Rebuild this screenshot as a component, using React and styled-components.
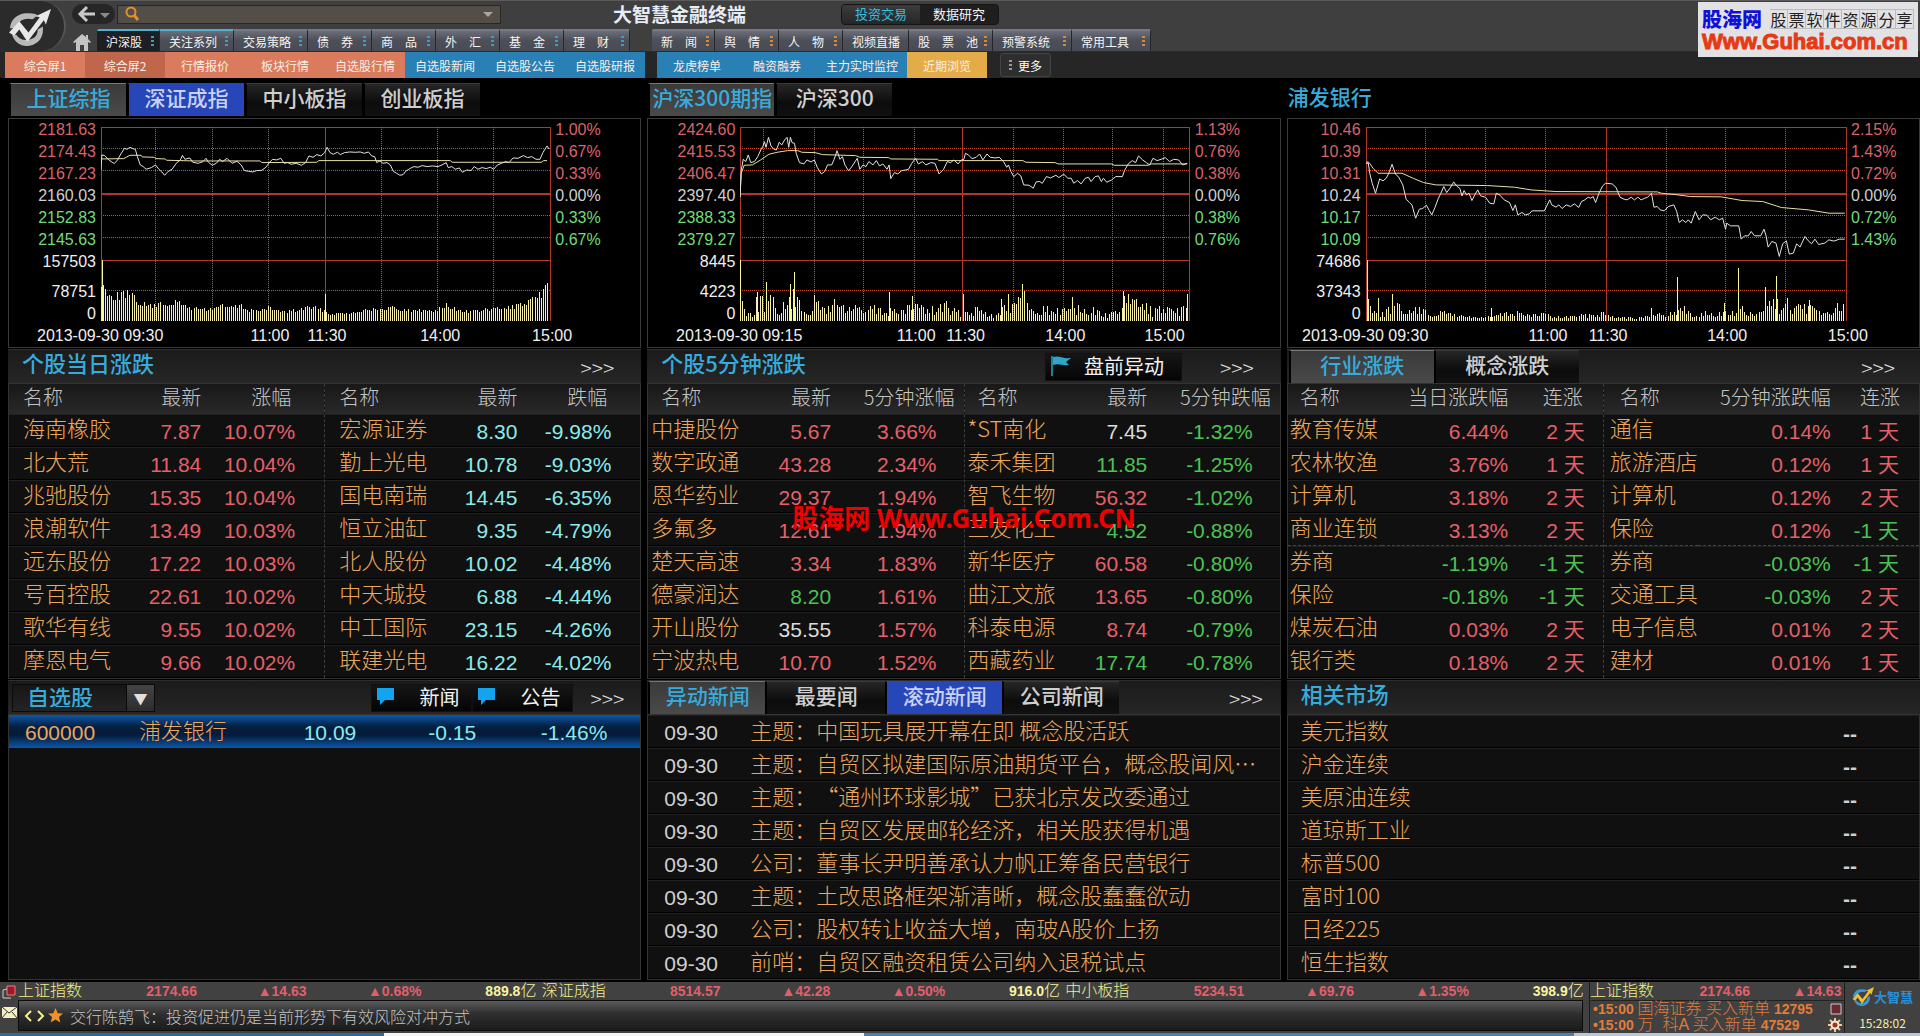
import React from 'react';
import styled, { createGlobalStyle, css } from 'styled-components';

const GlobalStyle = createGlobalStyle`
  * {
    box-sizing: border-box;
  }
  body {
    margin: 0;
    background: #000;
    color: #d8d8d8;
    font-family: 'Noto Sans CJK SC', sans-serif;
    text-spacing-trim: space-all;
  }
  button, input, select {
    font-family: inherit;
    margin: 0;
    padding: 0;
    border: 0;
    border-radius: 0;
    color: inherit;
    background: none;
  }
  h1, h2, p, ul {
    margin: 0;
    padding: 0;
    font-weight: 400;
  }
`;

const colors = {
  red: '#e4606a',
  green: '#4cc253',
  cyan: '#8ceaea',
  white: '#dcdcdc',
  name: '#eba75d',
  blue: '#38abdd',
  axisRed: '#d9636a',
  axisGreen: '#6fdc78',
};

/* ---------- header ---------- */

const Page = styled.div`
  min-height: 100vh;
  display: flex;
  flex-direction: column;
  background: #060606;
`;
const Header = styled.header`
  position: relative;
`;
const TopBar = styled.div`
  display: flex;
  height: 52px;
  border-top: 1px solid #5a5a5a;
  background: #3f3f3f;
  border-bottom: 1px solid #2c2c2c;
`;
const Logo = styled.div`
  width: 66px;
  background: #2b2b2b;
  border-right: 2px solid #555;
  border-radius: 0 32px 32px 0;
  svg {
    display: block;
    margin: 6px 0 0 8px;
  }
`;
const TopRows = styled.div`
  flex: 1;
  display: flex;
  flex-direction: column;
  justify-content: space-between;
`;
const TopRow = styled.div`
  display: flex;
  align-items: center;
  padding: 2px 0 0 6px;
`;
const BackButton = styled.button`
  width: 43px;
  height: 20px;
  border-radius: 10px;
  background: #262626;
  svg {
    display: block;
    margin: 0 auto;
  }
`;
const Search = styled.div`
  display: flex;
  align-items: center;
  flex: 0 1 384px;
  height: 19px;
  margin-left: 2px;
  padding: 0 6px;
  border: 1px solid #2a2622;
  background: #534e48;
  input {
    flex: 1;
    min-width: 0;
    height: 16px;
    font-size: 12px;
    outline: none;
  }
  button {
    width: 12px;
    height: 12px;
  }
  svg {
    display: block;
  }
`;
const AppTitle = styled.h1`
  margin-left: 112px;
  font-size: 19px;
  line-height: 22px;
  font-weight: 700;
  color: #e6ecf6;
`;
const ModeSwitch = styled.div`
  display: flex;
  margin-left: 95px;
  height: 21px;
  border: 1px solid #151515;
  border-radius: 4px;
  overflow: hidden;
  background: #1e1e1e;
`;
const ModeButton = styled.button`
  width: 78px;
  font-size: 13px;
  line-height: 18px;
  color: ${(props) => (props.$on ? '#35bfe0' : '#f2f2f2')};
  background: ${(props) => (props.$on ? 'linear-gradient(#3c3c3c, #262626)' : 'none')};
`;
const MenuRow = styled.nav`
  display: flex;
  align-items: flex-end;
  padding-left: 6px;
`;
const HomeButton = styled.button`
  width: 25px;
  height: 18px;
  svg {
    display: block;
  }
`;
const MenuGroup = styled.div`
  display: flex;
  margin-right: 22px;
  border-radius: 2px 2px 0 0;
  overflow: hidden;
`;
const MenuButton = styled.button`
  display: flex;
  align-items: center;
  justify-content: space-between;
  width: ${(props) => props.$width}px;
  height: 22px;
  padding: 0 5px 0 9px;
  font-size: 12px;
  white-space: pre;
  color: #f4f4f4;
  background: linear-gradient(#6c6f7a, #4d5059 45%, #484b54);
  border-right: 1px solid #25262b;
  border-top: 2px solid ${(props) => (props.$lit ? '#4fb0cf' : '#777a84')};
  ${(props) =>
    props.$on &&
    css`
      background: #1e1f22;
    `}
`;
const Dots = styled.span`
  width: 3px;
  height: 11px;
  background: repeating-linear-gradient(${(props) => props.$color} 0 2px, transparent 2px 4px);
`;
const SubBar = styled.nav`
  display: flex;
  height: 26px;
  padding-left: 5px;
  background: #262626;
`;
const subColors = {
  orange: '#d97b5c',
  rust: '#c0674b',
  blue: '#2980b5',
  gold: '#e3ac48',
};
const SubButton = styled.button`
  flex: 0 1 ${(props) => props.$width || 80}px;
  font-size: 12px;
  white-space: nowrap;
  color: #fbeee6;
  background: ${(props) => subColors[props.$tone]};
`;
const SubGap = styled.div`
  flex: 0 0 12px;
`;
const MoreButton = styled.button`
  display: flex;
  align-items: center;
  justify-content: center;
  gap: 6px;
  width: 51px;
  height: 24px;
  margin: 1px 0 0 13px;
  font-size: 12px;
  color: #fff;
  border: 1px solid #444;
  border-radius: 3px;
  background: #2e2e2e;
`;
const SiteBadge = styled.div`
  position: absolute;
  top: 2px;
  right: 2px;
  width: 220px;
  height: 55px;
  padding: 4px 4px 0;
  background: #e2e2e4;
`;
const BadgeLine = styled.div`
  display: flex;
  align-items: center;
  justify-content: space-between;
  height: 25px;
  strong {
    font-size: 20px;
    font-weight: 900;
    color: #1010d8;
  }
`;
const BadgeBoxes = styled.span`
  display: flex;
  font-size: 16px;
  line-height: 18px;
  color: #222;
  span {
    width: 18px;
    text-align: center;
    border: 1px solid #bbb;
    border-left-width: 0;
  }
`;
const BadgeUrl = styled.div`
  font-family: 'Liberation Sans', sans-serif;
  font-size: 22px;
  line-height: 22px;
  font-weight: 700;
  color: #e63a14;
  -webkit-text-stroke: 1px #e63a14;
`;

/* ---------- panels ---------- */

const Board = styled.main`
  flex: 1;
  display: grid;
  grid-template-columns: repeat(3, minmax(0, 1fr));
  gap: 6px;
  padding: 0 0 2px 8px;
  background: #000;
`;
const Column = styled.section`
  display: flex;
  flex-direction: column;
`;
const Bar = styled.div`
  display: flex;
  align-items: center;
  height: 34px;
  padding: 0 ${(props) => props.$right || 27}px 0 14px;
  margin-top: 1px;
  border-top: 1px solid #2e2e2e;
  background: linear-gradient(#1b1b1b, #262626);
`;
const TabBar = styled(Bar)`
  align-items: stretch;
  padding-left: ${(props) => props.$left || 1}px;
`;
const ChartTabs = styled.div`
  display: flex;
  align-items: flex-end;
  gap: 1px;
  height: 40px;
  padding: 0 0 2px 1px;
`;
const Tab = styled.button`
  min-width: ${(props) => props.$width || 117}px;
  height: 33px;
  padding: 0 2px 6px;
  font-size: 21px;
  line-height: 26px;
  font-weight: 500;
  color: #cfcfcf;
  background: linear-gradient(#262626, #0c0c0c 60%, #111);
  border-top: 1px solid #3a3a3a;
  border-left: 2px solid #000;
  ${(props) =>
    props.$state === 'active' &&
    css`
      color: ${colors.blue};
      background: linear-gradient(#3a3a3a, #4a4a4a);
      border-top-color: #777;
    `}
  ${(props) =>
    props.$state === 'hot' &&
    css`
      color: #c9d2f4;
      background: #2747b8;
      border-top-color: #2747b8;
    `}
`;
const Title = styled.h2`
  font-size: 22px;
  line-height: 25px;
  font-weight: 500;
  color: ${colors.blue};
  padding-bottom: 8px;
`;
const ChartTitle = styled(Title)`
  font-size: 21px;
  padding-bottom: 7px;
`;
const More = styled.a`
  margin-left: auto;
  align-self: center;
  font-size: 21px;
  line-height: 24px;
  font-weight: 300;
  color: #ddd;
  text-decoration: none;
`;
const DarkButton = styled.button`
  display: flex;
  align-items: center;
  height: 28px;
  gap: ${(props) => props.$space}px;
  padding: 0 ${(props) => props.$end}px 2px 4px;
  font-size: 20px;
  line-height: 26px;
  color: #f2f2f2;
  background: linear-gradient(#161616, #040404);
  border: 1px solid #111;
`;
const Push = styled.div`
  margin-left: auto;
  display: flex;
  ${More} {
    margin-left: ${(props) => props.$gap}px;
  }
`;
const Panel = styled.div`
  position: relative;
  display: flex;
  flex: ${(props) => (props.$fill ? 1 : 'none')};
  flex-direction: ${(props) => (props.$column ? 'column' : 'row')};
  border: 1px solid #333;
  background: #101010;
`;

/* ---------- intraday chart ---------- */

const ChartPanel = styled.div`
  display: grid;
  grid-template-columns: ${(props) => props.$left}px minmax(0, 1fr) ${(props) => props.$right}px;
  height: 230px;
  border: 1px solid #3a3a3a;
  background: #000;
`;
const Axis = styled.div`
  display: flex;
  flex-direction: column;
  padding: 0 5px;
  text-align: ${(props) => props.$align};
  font-family: 'Liberation Sans', sans-serif;
  font-size: 16px;
  line-height: 22px;
  span:nth-child(8) {
    margin-top: 8px;
  }
`;
const AxisLabel = styled.span`
  color: ${(props) => props.$color};
`;
const Plot = styled.svg`
  width: 100%;
  height: 220px;
  margin-top: 8px;
  overflow: visible;
  text {
    font-family: 'Liberation Sans', sans-serif;
    font-size: 16px;
    fill: #f0f0f0;
  }
  path, polyline {
    fill: none;
    vector-effect: non-scaling-stroke;
  }
`;

const axisColors = [
  colors.axisRed, colors.axisRed, colors.axisRed, '#cfcfcf',
  colors.axisGreen, colors.axisGreen, '#f0f0f0', '#f0f0f0', '#f0f0f0',
];
const levels = [
  { y: 0 },
  { y: 21, dotted: true },
  { y: 43, dotted: true },
  { y: 67, zero: true },
  { y: 88, dotted: true },
  { y: 110, dotted: true },
  { y: 133 },
  { y: 163, dotted: true },
];

// interpolates the volume envelope and returns one stroke per tick
const volumeBars = (chart, odd) => {
  const [x0, y0, w, h] = chart.box;
  const base = y0 + h;
  const { volume, rough } = chart;
  let d = '';
  let seed = 7;
  let n = 0;
  let k = 0;
  for (let x = x0; x < x0 + w - 4; x += 5) {
    while (k < volume.length - 2 && volume[k + 1][0] < x) k += 1;
    const [ax, ay] = volume[k];
    const [bx, by] = volume[k + 1];
    const t = Math.min(1, Math.max(0, (x - ax) / (bx - ax)));
    seed = (seed * 1103515245 + 12345) % 2147483648;
    const size = (ay + (by - ay) * t) * (1 - rough * (seed / 2147483648));
    if (n % 2 === odd) d += `M${x} ${base}V${Math.round(base - size)}`;
    n += 1;
  }
  if (odd) {
    chart.spikes.forEach(([x, size]) => {
      d += `M${x} ${base}V${base - size}`;
    });
  }
  return d;
};

const charts = {
  sh: {
    box: [243, 51, 1087, 583],
    left: 92,
    right: 90,
    prices: ['2181.63', '2174.43', '2167.23', '2160.03', '2152.83', '2145.63', '157503', '78751', '0'],
    percents: ['1.00%', '0.67%', '0.33%', '0.00%', '0.33%', '0.67%'],
    ticks: [12.2, 24.8, 37.3, 62.4, 75, 87.4],
    noon: 49.9,
    start: '2013-09-30 09:30',
    times: [['11:00', 37.6], ['11:30', 50.3], ['14:00', 75.5], ['15:00', 100.4]],
    rough: 0.3,
    line: '243,182 245,135 252,137 262,150 275,161 283,150 292,130 300,115 306,118 313,112 320,116 326,118 331,140 338,165 345,170 352,178 365,173 375,165 383,178 390,186 397,196 405,185 415,178 425,160 435,150 440,136 446,148 458,144 465,157 478,160 490,155 497,145 503,157 512,166 522,160 530,148 537,155 548,145 560,160 572,154 582,165 590,182 600,184 610,186 620,182 632,181 642,172 650,158 658,148 668,150 678,145 686,160 695,158 703,163 715,160 728,166 738,158 746,138 756,142 765,134 775,138 784,128 790,112 797,128 805,133 815,127 822,134 832,128 845,126 858,127 870,126 880,130 890,126 898,138 905,140 910,158 918,153 925,160 935,158 943,165 950,184 958,190 966,196 974,194 980,184 990,176 1000,170 1010,172 1020,167 1032,170 1045,168 1058,170 1068,165 1078,158 1083,173 1092,170 1100,178 1110,174 1117,187 1128,180 1138,182 1146,170 1155,178 1165,173 1175,176 1185,172 1193,178 1202,165 1212,160 1222,155 1230,158 1240,144 1252,145 1265,137 1275,143 1285,140 1295,148 1305,148 1312,128 1322,108 1327,117',
    average: '243,147 298,146 313,136 340,136 343,141 372,142 376,146 398,147 402,151 470,153 628,153 632,158 765,157 770,152 1088,152 1093,157 1308,157 1314,152 1322,152',
    volume: [[243, 125], [256, 110], [262, 98], [270, 85], [305, 98], [320, 82], [340, 60], [370, 52], [400, 62], [430, 64], [450, 50], [480, 42], [510, 42], [535, 54], [560, 48], [585, 52], [600, 38], [640, 38], [652, 48], [680, 32], [720, 38], [750, 50], [780, 38], [795, 25], [830, 27], [870, 33], [890, 45], [920, 36], [945, 50], [960, 42], [1000, 36], [1050, 38], [1080, 52], [1100, 40], [1140, 32], [1180, 41], [1220, 44], [1245, 52], [1270, 58], [1290, 72], [1305, 92], [1325, 125]],
    spikes: [[247, 182], [787, 80], [1080, 54]],
  },
  csi: {
    box: [240, 51, 1088, 583],
    left: 92,
    right: 90,
    prices: ['2424.60', '2415.53', '2406.47', '2397.40', '2388.33', '2379.27', '8445', '4223', '0'],
    percents: ['1.13%', '0.76%', '0.38%', '0.00%', '0.38%', '0.76%'],
    ticks: [5.3, 16.6, 27.5, 38.8, 60.8, 72.1, 82.9, 94.2],
    noon: 49.6,
    start: '2013-09-30 09:15',
    times: [['11:00', 39.2], ['11:30', 50.2], ['14:00', 72.4], ['15:00', 94.5]],
    rough: 0.7,
    line: '240,262 243,180 248,148 254,155 260,135 266,158 275,155 283,140 291,118 296,108 299,95 303,112 309,82 315,108 322,118 328,120 335,97 341,105 348,90 354,82 358,112 362,82 366,98 372,100 376,130 384,158 395,162 402,150 412,156 420,150 427,172 437,192 445,185 452,165 462,165 468,148 475,122 482,148 488,140 494,165 503,183 512,168 524,145 530,178 538,165 545,170 552,155 562,165 570,152 578,168 586,162 596,178 601,165 605,206 614,188 622,192 632,182 642,180 648,178 656,160 665,145 672,162 682,155 690,165 702,158 712,160 722,192 733,178 742,155 750,158 758,150 768,162 776,150 782,148 786,130 793,135 802,146 812,142 820,132 828,150 838,132 846,142 858,144 868,142 878,155 886,172 890,165 896,185 903,200 912,190 920,198 927,225 940,226 950,235 957,216 966,215 972,220 982,200 992,204 1005,196 1012,203 1024,193 1034,205 1042,205 1048,220 1057,212 1066,222 1076,205 1084,202 1090,215 1100,200 1108,198 1115,215 1120,205 1128,217 1140,210 1150,200 1166,200 1171,182 1180,162 1190,152 1198,158 1205,138 1215,150 1224,158 1232,165 1240,145 1250,152 1260,148 1270,143 1280,155 1290,148 1302,150 1312,165 1323,160',
    average: '240,262 243,190 250,166 270,165 290,150 310,133 330,127 355,122 380,122 390,127 422,128 440,134 520,137 530,142 600,143 605,147 718,148 722,152 925,152 932,157 1003,158 1010,162 1140,162 1146,166 1228,166 1236,162 1323,162',
    volume: [[240, 90], [250, 60], [270, 32], [283, 88], [303, 85], [326, 72], [335, 45], [350, 65], [372, 105], [385, 65], [410, 40], [420, 80], [450, 45], [466, 80], [500, 52], [524, 68], [535, 35], [555, 55], [580, 42], [615, 48], [640, 35], [658, 78], [675, 62], [700, 42], [740, 70], [750, 42], [775, 36], [795, 52], [830, 46], [860, 25], [874, 62], [900, 60], [923, 80], [935, 65], [950, 35], [977, 55], [1000, 36], [1046, 60], [1080, 36], [1105, 50], [1120, 26], [1150, 32], [1168, 75], [1200, 75], [1222, 62], [1240, 42], [1265, 50], [1290, 32], [1310, 52], [1325, 45]],
    spikes: [[241, 182], [283, 88], [305, 118], [363, 112], [373, 148], [602, 88], [658, 75], [780, 80], [874, 66], [891, 80], [923, 112], [928, 91], [1046, 72], [1168, 90], [1181, 80], [1323, 80]],
  },
  pf: {
    box: [231, 51, 1161, 583],
    left: 78,
    right: 73,
    prices: ['10.46', '10.39', '10.31', '10.24', '10.17', '10.09', '74686', '37343', '0'],
    percents: ['2.15%', '1.43%', '0.72%', '0.00%', '0.72%', '1.43%'],
    ticks: [12.4, 24.9, 37.4, 62.5, 74.9, 87.4],
    noon: 50,
    start: '2013-09-30 09:30',
    times: [['11:00', 37.9], ['11:30', 50.4], ['14:00', 75.2], ['15:00', 100.3]],
    rough: 0.6,
    line: '231,160 236,155 240,190 246,220 254,250 264,207 272,213 280,205 286,190 294,163 302,192 310,202 320,225 328,268 336,278 342,285 351,325 360,298 368,296 377,286 384,302 390,315 398,292 405,268 412,250 419,230 426,248 434,235 443,216 450,228 458,236 463,258 468,242 474,255 480,250 487,272 494,255 501,240 508,258 520,262 530,280 540,282 546,250 555,256 565,270 578,278 586,302 592,285 598,315 608,308 616,315 626,312 632,303 662,303 668,288 675,270 680,285 690,292 697,285 705,296 715,285 725,290 735,282 745,293 752,275 760,270 768,262 774,265 780,260 786,278 794,250 803,228 810,220 826,222 835,232 845,262 855,268 862,270 872,262 880,270 888,262 896,270 905,265 912,262 921,250 927,292 935,290 942,300 952,303 962,290 975,285 982,305 988,338 996,330 1004,338 1010,330 1017,340 1027,305 1036,330 1045,315 1055,316 1064,330 1075,322 1085,330 1093,325 1100,358 1103,340 1112,348 1132,348 1138,388 1146,378 1155,378 1162,365 1170,378 1185,378 1193,358 1198,378 1203,412 1212,395 1222,400 1230,440 1238,402 1247,393 1254,433 1264,430 1272,402 1280,412 1292,380 1300,393 1308,402 1316,388 1325,404 1340,400 1350,390 1362,394 1375,388 1388,388',
    average: '231,160 240,160 248,175 260,190 318,190 345,205 370,218 400,225 525,227 590,232 630,240 690,245 935,246 945,250 985,255 1015,260 1090,261 1140,272 1190,275 1235,293 1300,300 1350,310 1388,310',
    volume: [[231, 90], [240, 70], [250, 52], [258, 30], [272, 28], [295, 60], [320, 50], [335, 32], [350, 48], [370, 40], [385, 25], [423, 35], [440, 28], [470, 18], [520, 15], [545, 22], [595, 36], [630, 20], [662, 33], [680, 16], [720, 16], [770, 25], [803, 32], [820, 20], [870, 15], [900, 12], [945, 30], [978, 30], [995, 55], [1010, 38], [1025, 14], [1044, 35], [1080, 20], [1097, 40], [1125, 30], [1145, 50], [1155, 25], [1190, 30], [1202, 75], [1227, 70], [1235, 35], [1250, 60], [1260, 35], [1278, 52], [1304, 55], [1340, 38], [1352, 24], [1367, 58], [1388, 52]],
    spikes: [[235, 182], [262, 68], [295, 80], [534, 38], [920, 40], [983, 132], [1097, 55], [1132, 160], [1197, 103], [1223, 136], [1251, 68], [1304, 63]],
  },
};

const IntradayChart = ({ chart }) => (
  <ChartPanel $left={chart.left} $right={chart.right}>
    <Axis $align="right">
      {chart.prices.map((p, i) => (
        <AxisLabel key={p} $color={axisColors[i]}>{p}</AxisLabel>
      ))}
    </Axis>
    <Plot>
      <g shapeRendering="crispEdges" stroke="#b0362e">
        {levels.map((l) => (
          <line
            key={l.y}
            x1="0"
            x2="100%"
            y1={l.y}
            y2={l.y}
            stroke={l.dotted ? '#d2502e' : undefined}
            strokeWidth={l.zero ? 2 : 1}
            strokeDasharray={l.dotted ? '1 1' : undefined}
          />
        ))}
        {chart.ticks.map((t) => (
          <line key={t} x1={`${t}%`} x2={`${t}%`} y1="0" y2="194" stroke="#d2502e" strokeDasharray="1 1" />
        ))}
        {[0, chart.noon, 100].map((t) => (
          <line key={t} x1={`${t}%`} x2={`${t}%`} y1="0" y2="194" />
        ))}
      </g>
      <svg width="100%" height="194" viewBox={chart.box.join(' ')} preserveAspectRatio="none">
        <path d={volumeBars(chart, 0)} stroke="#fbe8c4" shapeRendering="crispEdges" />
        <path d={volumeBars(chart, 1)} stroke="#faf894" shapeRendering="crispEdges" />
        <polyline points={chart.average} stroke="#e8dfa0" />
        <polyline points={chart.line} stroke="#e6e2e2" />
      </svg>
      <text x="-64" y="214">{chart.start}</text>
      {chart.times.map(([label, x]) => (
        <text key={label} x={`${x}%`} y="214" textAnchor="middle">{label}</text>
      ))}
    </Plot>
    <Axis $align="left">
      {chart.percents.map((p, i) => (
        <AxisLabel key={i} $color={axisColors[i]}>{p}</AxisLabel>
      ))}
    </Axis>
  </ChartPanel>
);

/* ---------- ranking tables ---------- */

const RankTable = styled.table`
  flex: 1;
  width: 50%;
  table-layout: fixed;
  border-collapse: separate;
  border-spacing: 0;
  & + & {
    border-left: 1px dashed #3c3c3c;
  }
  th {
    height: 30px;
    padding: 0 0 4px;
    font-size: 20px;
    line-height: 26px;
    font-weight: 300;
    text-align: right;
    white-space: nowrap;
    color: #c4c4c4;
    background: linear-gradient(#181818, #292929);
  }
  td {
    height: 33px;
    padding: 3px 0 0;
    font-family: 'Liberation Sans', 'Noto Sans CJK SC', sans-serif;
    font-size: 21px;
    line-height: 26px;
    text-align: right;
    white-space: nowrap;
    border-top: 1px solid #202020;
    border-bottom: 1px solid #000;
  }
  th:first-child {
    width: ${(props) => props.$cols[0]}%;
    padding-left: ${(props) => props.$head[0]}px;
    text-align: left;
  }
  th:nth-child(2) {
    width: ${(props) => props.$cols[1]}%;
  }
  th:last-child {
    padding-right: ${(props) => props.$head[1]}px;
  }
  td:first-child {
    padding: 0 0 6px ${(props) => props.$body[0]}px;
    font-family: 'Noto Sans CJK SC', sans-serif;
    font-size: 22px;
    line-height: 25px;
    font-weight: 300;
    text-align: left;
    color: ${colors.name};
  }
  td:last-child {
    padding-right: ${(props) => props.$body[1]}px;
  }
  tr.split td {
    border-bottom: 1px dashed #444;
  }
`;
const Num = styled.td`
  color: ${(props) => colors[props.$tone]};
`;

const Ranking = ({ heads, rows, shape, split }) => (
  <RankTable $cols={shape.cols} $head={shape.head} $body={shape.body}>
    <thead>
      <tr>{heads.map((h) => <th key={h} scope="col">{h}</th>)}</tr>
    </thead>
    <tbody>
      {rows.map(([name, a, toneA, b, toneB], i) => (
        <tr key={name} className={split === i ? 'split' : undefined}>
          <td>{name}</td>
          <Num $tone={toneA}>{a}</Num>
          <Num $tone={toneB}>{b}</Num>
        </tr>
      ))}
    </tbody>
  </RankTable>
);

const shapes = {
  day: { cols: [30, 31], head: [14, 33], body: [14, 29] },
  minute: { cols: [30, 28], head: [13, 9], body: [3, 27] },
  sector: { cols: [30, 40], head: [12, 20], body: [2, 18] },
  sectorFast: { cols: [30, 42], head: [16, 19], body: [6, 20] },
};

const r = 'red';
const g = 'green';
const c = 'cyan';
const w = 'white';
const dayUp = [
  ['海南橡胶', '7.87', r, '10.07%', r],
  ['北大荒', '11.84', r, '10.04%', r],
  ['兆驰股份', '15.35', r, '10.04%', r],
  ['浪潮软件', '13.49', r, '10.03%', r],
  ['远东股份', '17.22', r, '10.03%', r],
  ['号百控股', '22.61', r, '10.02%', r],
  ['歌华有线', '9.55', r, '10.02%', r],
  ['摩恩电气', '9.66', r, '10.02%', r],
];
const dayDown = [
  ['宏源证券', '8.30', c, '-9.98%', c],
  ['勤上光电', '10.78', c, '-9.03%', c],
  ['国电南瑞', '14.45', c, '-6.35%', c],
  ['恒立油缸', '9.35', c, '-4.79%', c],
  ['北人股份', '10.02', c, '-4.48%', c],
  ['中天城投', '6.88', c, '-4.44%', c],
  ['中工国际', '23.15', c, '-4.26%', c],
  ['联建光电', '16.22', c, '-4.02%', c],
];
const minuteUp = [
  ['中捷股份', '5.67', r, '3.66%', r],
  ['数字政通', '43.28', r, '2.34%', r],
  ['恩华药业', '29.37', r, '1.94%', r],
  ['多氟多', '12.61', r, '1.94%', r],
  ['楚天高速', '3.34', r, '1.83%', r],
  ['德豪润达', '8.20', g, '1.61%', r],
  ['开山股份', '35.55', w, '1.57%', r],
  ['宁波热电', '10.70', r, '1.52%', r],
];
const minuteDown = [
  ['*ST南化', '7.45', w, '-1.32%', g],
  ['泰禾集团', '11.85', g, '-1.25%', g],
  ['智飞生物', '56.32', r, '-1.02%', g],
  ['三友化工', '4.52', g, '-0.88%', g],
  ['新华医疗', '60.58', r, '-0.80%', g],
  ['曲江文旅', '13.65', r, '-0.80%', g],
  ['科泰电源', '8.74', r, '-0.79%', g],
  ['西藏药业', '17.74', g, '-0.78%', g],
];
const sectorDay = [
  ['教育传媒', '6.44%', r, '2 天', r],
  ['农林牧渔', '3.76%', r, '1 天', r],
  ['计算机', '3.18%', r, '2 天', r],
  ['商业连锁', '3.13%', r, '2 天', r],
  ['券商', '-1.19%', g, '-1 天', g],
  ['保险', '-0.18%', g, '-1 天', g],
  ['煤炭石油', '0.03%', r, '2 天', r],
  ['银行类', '0.18%', r, '2 天', r],
];
const sectorMinute = [
  ['通信', '0.14%', r, '1 天', r],
  ['旅游酒店', '0.12%', r, '1 天', r],
  ['计算机', '0.12%', r, '2 天', r],
  ['保险', '0.12%', r, '-1 天', g],
  ['券商', '-0.03%', g, '-1 天', g],
  ['交通工具', '-0.03%', g, '2 天', r],
  ['电子信息', '0.01%', r, '2 天', r],
  ['建材', '0.01%', r, '1 天', r],
];

const Overprint = styled.div`
  position: absolute;
  top: 118px;
  left: 0;
  right: 0;
  text-align: center;
  font-family: 'Noto Sans', 'Noto Sans CJK SC', sans-serif;
  font-size: 26px;
  line-height: 32px;
  font-weight: 700;
  color: #f00000;
  pointer-events: none;
`;

/* ---------- lower lists ---------- */

const WatchSelect = styled.div`
  position: relative;
  display: flex;
  width: 143px;
  height: 28px;
  margin-left: -10px;
  select {
    width: 100%;
    padding: 0 0 4px 14px;
    appearance: none;
    font-size: 22px;
    line-height: 22px;
    font-weight: 500;
    color: ${colors.blue};
    background: linear-gradient(#161616, #242424);
    border: 1px solid #0a0a0a;
  }
  span {
    position: absolute;
    top: 0;
    right: 0;
    width: 29px;
    height: 28px;
    font-size: 14px;
    line-height: 26px;
    text-align: center;
    color: #e4e0d8;
    background: linear-gradient(#444, #2c2c2c);
    border: 1px solid #0a0a0a;
    pointer-events: none;
  }
`;
const WatchTable = styled.table`
  width: 100%;
  table-layout: fixed;
  border-spacing: 0;
  font-family: 'Liberation Sans', 'Noto Sans CJK SC', sans-serif;
  font-size: 21px;
  line-height: 28px;
  color: ${colors.cyan};
  background: linear-gradient(#0d56a8, #052043 35%, #041a38 60%, #0d56a8);
  td {
    height: 33px;
    padding: 2px 0 0;
    text-align: right;
  }
  td:nth-child(1) {
    width: 130px;
    padding-left: 16px;
    text-align: left;
    color: ${colors.name};
  }
  td:nth-child(2) {
    padding: 0 0 5px;
    font-family: 'Noto Sans CJK SC', sans-serif;
    font-size: 22px;
    font-weight: 300;
    text-align: left;
    color: ${colors.name};
  }
  td:nth-child(3) {
    width: 16%;
  }
  td:nth-child(4) {
    width: 19%;
  }
  td:nth-child(5) {
    width: 26%;
    padding-right: 33px;
  }
`;
const List = styled.ul`
  list-style: none;
`;
const Item = styled.li`
  display: flex;
  align-items: center;
  height: 33px;
  padding-left: ${(props) => props.$left}px;
  border-top: 1px solid #202020;
  border-bottom: 1px solid #000;
  time {
    width: 86px;
    padding-top: 3px;
    font-family: 'Liberation Sans', sans-serif;
    font-size: 21px;
    color: #cfcfcf;
  }
  a {
    padding-bottom: 5px;
    font-size: 22px;
    line-height: 26px;
    font-weight: 300;
    white-space: nowrap;
    color: ${colors.name};
    text-decoration: none;
  }
  b {
    margin-left: auto;
    padding: 4px 62px 0 0;
    font-family: 'Liberation Sans', sans-serif;
    font-size: 21px;
    color: #cfcfcf;
  }
`;

const news = [
  '主题：中国玩具展开幕在即 概念股活跃',
  '主题：自贸区拟建国际原油期货平台，概念股闻风…',
  '主题：“通州环球影城”已获北京发改委通过',
  '主题：自贸区发展邮轮经济，相关股获得机遇',
  '公司：董事长尹明善承认力帆正筹备民营银行',
  '主题：土改思路框架渐清晰，概念股蠢蠢欲动',
  '公司：股权转让收益大增，南玻A股价上扬',
  '前哨：自贸区融资租赁公司纳入退税试点',
];
const markets = ['美元指数', '沪金连续', '美原油连续', '道琼斯工业', '标普500', '富时100', '日经225', '恒生指数'];

/* ---------- status bar ---------- */

const Footer = styled.footer`
  background: #414141;
`;
const FooterGrid = styled.div`
  display: grid;
  grid-template-columns: 18px minmax(0, 1fr) 256px 75px;
  height: 51px;
`;
const FooterIcons = styled.div`
  display: flex;
  flex-direction: column;
  gap: 8px;
  padding: 3px 0 0 2px;
`;
const Indices = styled.div`
  display: grid;
  grid-template-columns: repeat(3, minmax(0, 1fr));
  height: 18px;
`;
const Quote = styled.div`
  display: grid;
  grid-template-columns: 12fr 22fr 21fr 22fr 22fr 1fr;
  font-family: 'Liberation Sans', 'Noto Sans CJK SC', sans-serif;
  font-size: 14px;
  line-height: 18px;
  font-weight: 700;
  text-align: right;
  white-space: nowrap;
  color: #e0606a;
  span {
    font-size: 16px;
    font-weight: 300;
    text-align: left;
    color: #f0ee88;
  }
  em {
    font-style: normal;
    color: #f6f4a0;
  }
  i {
    font-style: normal;
    font-size: 16px;
    font-weight: 300;
  }
`;
const SideQuote = styled(Quote)`
  grid-template-columns: 26% 37% 36%;
  height: 19px;
  border-bottom: 1px solid #222;
`;
const Ticker = styled.div`
  display: flex;
  align-items: center;
  height: 31px;
  margin-right: 6px;
  padding-left: 5px;
  border: 1px solid #0c0c0c;
  background: linear-gradient(#5a5a5a, #2e2e2e 45%, #1c1c1c);
  p {
    margin-left: 7px;
    font-size: 16px;
    line-height: 22px;
    font-weight: 300;
    color: #c4c4c4;
  }
  button {
    width: 12px;
    height: 16px;
  }
  svg {
    display: block;
  }
`;
const Side = styled.div`
  border-left: 1px solid #1c1c1c;
  border-right: 1px solid #1c1c1c;
`;
const Order = styled.div`
  display: flex;
  align-items: center;
  justify-content: space-between;
  height: 16px;
  padding: 0 2px 0 3px;
  font-family: 'Liberation Sans', 'Noto Sans CJK SC', sans-serif;
  font-size: 14px;
  font-weight: 700;
  line-height: 16px;
  white-space: pre;
  color: #e07c3c;
  span span {
    font-size: 16px;
    font-weight: 300;
  }
`;
const Brand = styled.div`
  display: flex;
  flex-direction: column;
  align-items: center;
  justify-content: space-between;
  padding: 4px 2px 2px;
  div {
    display: flex;
    align-items: center;
    font-size: 13px;
    line-height: 22px;
    font-weight: 700;
    color: #2b8fd6;
  }
  time {
    font-size: 12px;
    line-height: 16px;
    color: #f3f0a4;
  }
`;
const Taskbar = styled.div`
  height: 3px;
  background: linear-gradient(90deg, #2a6a9a 0 20%, #f4f4f4 20% 45%, #4a7fae 45% 82%, #b8c8d8 82%);
`;

const indices = [
  ['上证指数', '2174.66', '▲14.63', '▲0.68%', '889.8'],
  ['深证成指', '8514.57', '▲42.28', '▲0.50%', '916.0'],
  ['中小板指', '5234.51', '▲69.76', '▲1.35%', '398.9'],
];

const LogoMark = ({ size, ring, bolt }) => (
  <svg width={size} height={size} viewBox="0 0 42 40" aria-hidden="true">
    <path d="M2 20C2 12 8 6 17 5c5 0 9 0 12 2l-5 4C15 9 10 13 8 19z" fill={ring} />
    <path d="M4 26c3 9 11 13 20 10 8-3 11-10 10-18l-5 3c0 6-3 9-9 10-5 1-9-1-12-5z" fill={ring} />
    <path d="M1 24l10-11 9 11L31 9l-4-1L42 1l-5 15-2-4-16 21-8-12-5 6z" fill={bolt} />
  </svg>
);
const Bubble = () => (
  <svg width="19" height="18" viewBox="0 0 19 18" aria-hidden="true">
    <path d="M1 0h17v12H9l-5 5v-5H1z" fill="#12a4ee" />
  </svg>
);

const menuLeft = [
  ['沪深股', 63],
  ['关注系列', 74],
  ['交易策略', 74],
  ['债\u3000券', 64],
  ['商\u3000品', 64],
  ['外\u3000汇', 64],
  ['基\u3000金', 64],
  ['理\u3000财', 66],
];
const menuRight = [
  ['新\u3000闻', 63],
  ['舆\u3000情', 64],
  ['人\u3000物', 64],
  ['视频直播', 66],
  ['股\u3000票\u3000池', 84],
  ['预警系统', 79],
  ['常用工具', 79],
];

const App = () => {
  return (
    <Page lang="zh-CN">
      <GlobalStyle />
      <Header>
        <TopBar>
          <Logo>
            <LogoMark size={43} ring="#b9b9b9" bolt="#e8e8e8" />
          </Logo>
          <TopRows>
            <TopRow>
              <BackButton aria-label="返回">
                <svg width="38" height="18" viewBox="0 0 38 18">
                  <path d="M12 2L5 9l7 7M5 9h15" fill="none" stroke="#c9c9c9" strokeWidth="3" />
                  <path d="M25 8h10l-5 5z" fill="#8a8a8a" />
                </svg>
              </BackButton>
              <Search>
                <svg width="16" height="16" viewBox="0 0 16 16" aria-hidden="true">
                  <circle cx="7" cy="6" r="4.5" fill="none" stroke="#e0912c" strokeWidth="2" />
                  <path d="M10 9l4 5" stroke="#e0912c" strokeWidth="3" />
                </svg>
                <input type="text" aria-label="搜索" />
                <button aria-label="展开">
                  <svg width="12" height="12" viewBox="0 0 12 12">
                    <path d="M1 4h10L6 9z" fill="#a8a49e" />
                  </svg>
                </button>
              </Search>
              <AppTitle>大智慧金融终端</AppTitle>
              <ModeSwitch>
                <ModeButton $on>投资交易</ModeButton>
                <ModeButton>数据研究</ModeButton>
              </ModeSwitch>
            </TopRow>
            <MenuRow>
              <HomeButton aria-label="首页">
                <svg width="20" height="17" viewBox="0 0 20 17">
                  <path d="M10 0L1 8l1 1 2-1v9h4v-6h4v6h4V8l2 1 1-1-3-3V1h-2v2z" fill="#c4c4c4" />
                </svg>
              </HomeButton>
              <MenuGroup>
                {menuLeft.map(([label, width], i) => (
                  <MenuButton key={label} $width={width} $on={i === 0} $lit={i < 2}>
                    {label}
                    <Dots $color="#3f9cc0" />
                  </MenuButton>
                ))}
              </MenuGroup>
              <MenuGroup>
                {menuRight.map(([label, width]) => (
                  <MenuButton key={label} $width={width}>
                    {label}
                    {label !== '视频直播' && <Dots $color="#d08a3c" />}
                  </MenuButton>
                ))}
              </MenuGroup>
            </MenuRow>
          </TopRows>
        </TopBar>
        <SubBar>
          <SubButton $tone="orange">综合屏1</SubButton>
          <SubButton $tone="rust">综合屏2</SubButton>
          <SubButton $tone="orange">行情报价</SubButton>
          <SubButton $tone="orange">板块行情</SubButton>
          <SubButton $tone="orange">自选股行情</SubButton>
          <SubButton $tone="blue">自选股新闻</SubButton>
          <SubButton $tone="blue">自选股公告</SubButton>
          <SubButton $tone="blue">自选股研报</SubButton>
          <SubGap />
          <SubButton $tone="blue">龙虎榜单</SubButton>
          <SubButton $tone="blue">融资融券</SubButton>
          <SubButton $tone="blue" $width={90}>主力实时监控</SubButton>
          <SubButton $tone="gold">近期浏览</SubButton>
          <MoreButton>
            <Dots $color="#999" />
            更多
          </MoreButton>
        </SubBar>
        <SiteBadge>
          <BadgeLine>
            <strong>股海网</strong>
            <BadgeBoxes>
              {[...'股票软件资源分享'].map((ch) => <span key={ch}>{ch}</span>)}
            </BadgeBoxes>
          </BadgeLine>
          <BadgeUrl>Www.Guhai.com.cn</BadgeUrl>
        </SiteBadge>
      </Header>

      <Board>
        <Column>
          <ChartTabs>
            <Tab $state="active">上证综指</Tab>
            <Tab $state="hot">深证成指</Tab>
            <Tab>中小板指</Tab>
            <Tab>创业板指</Tab>
          </ChartTabs>
          <IntradayChart chart={charts.sh} />
          <Bar>
            <Title>个股当日涨跌</Title>
            <More href="#day">&gt;&gt;&gt;</More>
          </Bar>
          <Panel>
            <Ranking heads={['名称', '最新', '涨幅']} rows={dayUp} shape={shapes.day} />
            <Ranking heads={['名称', '最新', '跌幅']} rows={dayDown} shape={shapes.day} />
          </Panel>
          <Bar $right={17}>
            <WatchSelect>
              <select aria-label="自选股分组" defaultValue="自选股">
                <option>自选股</option>
              </select>
              <span>▼</span>
            </WatchSelect>
            <Push $gap={18}>
              <DarkButton $space={25} $end={11}>
                <Bubble />
                新闻
              </DarkButton>
              <DarkButton $space={25} $end={11}>
                <Bubble />
                公告
              </DarkButton>
              <More href="#watch">&gt;&gt;&gt;</More>
            </Push>
          </Bar>
          <Panel $fill $column>
            <WatchTable>
              <tbody>
                <tr>
                  <td>600000</td>
                  <td>浦发银行</td>
                  <td>10.09</td>
                  <td>-0.15</td>
                  <td>-1.46%</td>
                </tr>
              </tbody>
            </WatchTable>
          </Panel>
        </Column>

        <Column>
          <ChartTabs>
            <Tab $state="active">沪深300期指</Tab>
            <Tab>沪深300</Tab>
          </ChartTabs>
          <IntradayChart chart={charts.csi} />
          <Bar>
            <Title>个股5分钟涨跌</Title>
            <Push $gap={38}>
              <DarkButton $space={12} $end={17}>
                <svg width="22" height="22" viewBox="0 0 22 22" aria-hidden="true">
                  <path d="M2 1v20" stroke="#1f7f9c" strokeWidth="2" />
                  <path d="M3 2c6-2 9 2 18 1l-5 4 3 3c-6 1-10-2-16 0z" fill="#2fa6c8" />
                </svg>
                盘前异动
              </DarkButton>
              <More href="#minute">&gt;&gt;&gt;</More>
            </Push>
          </Bar>
          <Panel>
            <Ranking heads={['名称', '最新', '5分钟涨幅']} rows={minuteUp} shape={shapes.minute} />
            <Ranking heads={['名称', '最新', '5分钟跌幅']} rows={minuteDown} shape={shapes.minute} />
            <Overprint>股海网 Www.Guhai.Com.CN</Overprint>
          </Panel>
          <TabBar $right={18}>
            <Tab $state="active">异动新闻</Tab>
            <Tab $width={120}>最要闻</Tab>
            <Tab $state="hot">滚动新闻</Tab>
            <Tab>公司新闻</Tab>
            <More href="#news">&gt;&gt;&gt;</More>
          </TabBar>
          <Panel $fill $column>
            <List>
              {news.map((n) => (
                <Item key={n} $left={16}>
                  <time>09-30</time>
                  <a href="#news">{n}</a>
                </Item>
              ))}
            </List>
          </Panel>
        </Column>

        <Column>
          <ChartTabs>
            <ChartTitle>浦发银行</ChartTitle>
          </ChartTabs>
          <IntradayChart chart={charts.pf} />
          <TabBar $left={2} $right={25}>
            <Tab $state="active" $width={145}>行业涨跌</Tab>
            <Tab $width={145}>概念涨跌</Tab>
            <More href="#sector">&gt;&gt;&gt;</More>
          </TabBar>
          <Panel>
            <Ranking heads={['名称', '当日涨跌幅', '连涨']} rows={sectorDay} shape={shapes.sector} split={3} />
            <Ranking heads={['名称', '5分钟涨跌幅', '连涨']} rows={sectorMinute} shape={shapes.sectorFast} split={3} />
          </Panel>
          <Bar>
            <Title>相关市场</Title>
          </Bar>
          <Panel $fill $column>
            <List>
              {markets.map((m) => (
                <Item key={m} $left={13}>
                  <a href="#market">{m}</a>
                  <b>--</b>
                </Item>
              ))}
            </List>
          </Panel>
        </Column>
      </Board>

      <Footer>
        <FooterGrid>
          <FooterIcons>
            <svg width="14" height="14" viewBox="0 0 14 14" aria-hidden="true">
              <path d="M5 1h8v9H5z" fill="#a01822" stroke="#e08088" />
              <path d="M1 5v8h8M1 5l4-1" fill="none" stroke="#d0d0d0" />
            </svg>
            <svg width="15" height="11" viewBox="0 0 15 11" aria-hidden="true">
              <path d="M0 0h15v11H0z" fill="#f4f0c0" />
              <path d="M0 0l7 6 8-6M0 11l5-6M15 11l-5-6" fill="none" stroke="#333" />
            </svg>
          </FooterIcons>
          <div>
            <Indices>
              {indices.map(([name, value, change, pct, amount]) => (
                <Quote key={name}>
                  <span>{name}</span>
                  <div>{value}</div>
                  <div>{change}</div>
                  <div>{pct}</div>
                  <em>{amount}<i>亿</i></em>
                </Quote>
              ))}
            </Indices>
            <Ticker>
              <button aria-label="上一条">
                <svg width="10" height="14" viewBox="0 0 10 14">
                  <path d="M7 2L2 7l5 5" fill="none" stroke="#f4f090" strokeWidth="2" />
                </svg>
              </button>
              <button aria-label="下一条">
                <svg width="10" height="14" viewBox="0 0 10 14">
                  <path d="M2 2l5 5-5 5" fill="none" stroke="#f4f090" strokeWidth="2" />
                </svg>
              </button>
              <svg width="15" height="15" viewBox="0 0 15 15" aria-hidden="true">
                <path d="M7.500 0l2.200 5.200 5.300.4-4 3.500 1.300 5.400-4.800-2.900-4.800 2.900L4 9.100 0 5.600l5.300-.4z" fill="#f0922c" />
              </svg>
              <p>交行陈鹄飞：投资促进仍是当前形势下有效风险对冲方式</p>
            </Ticker>
          </div>
          <Side>
            <SideQuote>
              <span>上证指数</span>
              <div>2174.66</div>
              <div>▲14.63</div>
            </SideQuote>
            <Order>
              <span>•15:00 <span>国海证券 买入新单</span> 12795</span>
              <svg width="12" height="12" viewBox="0 0 12 12" aria-hidden="true">
                <path d="M1 1h10v10H1z" fill="#6a2a30" stroke="#d8c8c8" />
              </svg>
            </Order>
            <Order>
              <span>•15:00 <span>万{'  '}科A 买入新单</span> 47529</span>
              <svg width="14" height="14" viewBox="0 0 14 14" aria-hidden="true">
                <path d="M7 0v14M0 7h14M2 2l10 10M12 2L2 12" stroke="#f4c89c" strokeWidth="2" />
                <circle cx="7" cy="7" r="3.500" fill="#a03020" stroke="#fbe8d0" strokeWidth="2" />
              </svg>
            </Order>
          </Side>
          <Brand>
            <div>
              <LogoMark size={22} ring="#3a9ad8" bolt="#f0c030" />
              大智慧
            </div>
            <time>15:28:02</time>
          </Brand>
        </FooterGrid>
        <Taskbar />
      </Footer>
    </Page>
  );
};

export default App;
